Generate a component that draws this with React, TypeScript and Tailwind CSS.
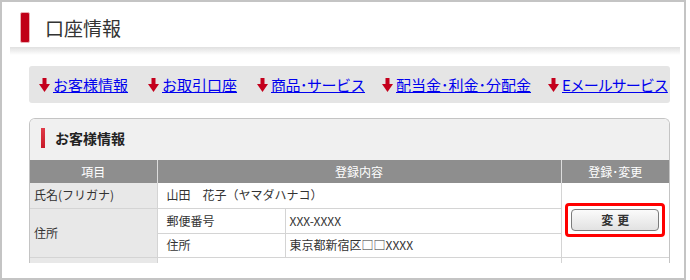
import React from 'react';

const DownArrow = () => (
  <svg width="11" height="14" viewBox="0 0 11 14" className="shrink-0">
    <rect x="3.5" y="0" width="4" height="7" fill="#c4001c" />
    <polygon points="0,6 11,6 5.5,14" fill="#c4001c" />
  </svg>
);

// each link gets a fixed slot so the row lines up with the original
const navLinks = [
  { label: 'お客様情報', slot: 'w-[109px]', text: '' },
  { label: 'お取引口座', slot: 'w-[109px]', text: '' },
  { label: '商品･サービス', slot: 'w-[125px]', text: 'tracking-[-0.5px]' },
  { label: '配当金･利金･分配金', slot: 'w-[166px]', text: '' },
  { label: 'Eメールサービス', slot: '', text: 'tracking-[-1px]' },
];

const App = () => {
  return (
    <div className="w-[690px] h-[280px] bg-white font-['Noto_Sans_CJK_JP','Noto_Sans',sans-serif] text-[#333]">
      <div className="w-[686px] h-[280px] border-2 border-[#c4c4c4] overflow-hidden">
        {/* page title */}
        <div className="h-[45px] pt-[10px] pl-[18px] flex items-start">
          <div className="w-[10px] h-[31px] bg-[#c00018] border border-[#eab0b6] rounded-[2px]" />
          <h1 className="ml-[15px] text-[19px] leading-[31px] text-[#333]">口座情報</h1>
        </div>
        <div className="ml-[8px] w-[670px] h-[8px] bg-gradient-to-b from-[#e0e0e0] to-white" />

        {/* anchor links */}
        <div className="mt-[11px] ml-[27px] w-[641px] h-[37px] bg-[#e5e5e5] rounded-[3px] flex items-center pl-[10px]">
          {navLinks.map((l) => (
            <div key={l.label} className={`${l.slot} shrink-0`}>
              <a href="#" className="inline-flex items-center gap-[3px] text-[15px] leading-[20px] text-[#0000ee] underline whitespace-nowrap">
                <DownArrow />
                <span className={l.text}>{l.label}</span>
              </a>
            </div>
          ))}
        </div>

        {/* customer info panel */}
        <div className="mt-[15px] ml-[27px] w-[641px] h-[145px] border-x border-t border-[#c4c4c4] rounded-t-[6px] overflow-hidden">
          <div className="h-[41px] bg-[#f0f0f0] flex items-start pt-[9px] pl-[11px]">
            <div className="w-[4px] h-[20px] bg-gradient-to-b from-[#e03a48] to-[#c81828]" />
            <h2 className="ml-[10px] text-[14px] font-bold leading-[20px] text-[#222]">お客様情報</h2>
          </div>
          <table className="table-fixed border-collapse w-[639px] text-[12px] leading-[16px]">
            <colgroup>
              <col className="w-[127px]" />
              <col className="w-[128px]" />
              <col className="w-[276px]" />
              <col className="w-[108px]" />
            </colgroup>
            <thead>
              <tr className="h-[23px] bg-[#8e8e8e] text-white">
                <th className="font-normal border-r border-[#dcdcdc]">項目</th>
                <th colSpan={2} className="font-normal border-r border-[#dcdcdc]">登録内容</th>
                <th className="font-normal">登録･変更</th>
              </tr>
            </thead>
            <tbody>
              <tr className="h-[25px]">
                <td className="bg-[#e8e8e8] border border-l-0 border-t-0 border-[#d4d4d4] pl-[4px]">氏名(フリガナ)</td>
                <td colSpan={2} className="border border-t-0 border-[#d4d4d4] pl-[9px]">山田　花子（ヤマダハナコ）</td>
                <td rowSpan={3} className="border border-t-0 border-r-0 border-[#d4d4d4]">
                  <div className="flex justify-center">
                    <div className="border-[3px] border-[#ff0000] rounded-[4px] p-[3px]">
                      <button className="w-[88px] h-[22px] rounded-[4px] border border-[#7c7c7c] bg-gradient-to-b from-[#fbfbfb] to-[#e2e2e2] text-[12px] font-bold text-[#333] tracking-[4px] pl-[4px]">
                        変更
                      </button>
                    </div>
                  </div>
                </td>
              </tr>
              <tr className="h-[25px]">
                <td rowSpan={2} className="bg-[#e8e8e8] border border-l-0 border-[#d4d4d4] pl-[4px]">住所</td>
                <td className="border border-[#d4d4d4] pl-[9px]">郵便番号</td>
                <td className="border border-[#d4d4d4] pl-[4px]">XXX-XXXX</td>
              </tr>
              <tr className="h-[24px]">
                <td className="border border-[#d4d4d4] pl-[9px]">住所</td>
                <td className="border border-[#d4d4d4] pl-[4px]">東京都新宿区□□XXXX</td>
              </tr>
              <tr className="h-[25px]">
                <td className="bg-[#e8e8e8] border border-l-0 border-[#d4d4d4]"></td>
                <td colSpan={2} className="border border-[#d4d4d4]"></td>
                <td className="border border-r-0 border-[#d4d4d4]"></td>
              </tr>
            </tbody>
          </table>
        </div>
      </div>
    </div>
  );
};

export default App;
